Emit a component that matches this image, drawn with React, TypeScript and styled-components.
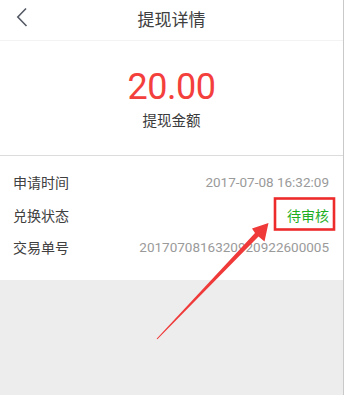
import React from "react";
import styled, { createGlobalStyle } from "styled-components";

const GlobalStyle = createGlobalStyle`
  html, body {
    margin: 0;
    padding: 0;
    background: #ededed;
  }
  body {
    font-family: Roboto, "Noto Sans CJK SC", "Noto Sans", sans-serif;
    -webkit-font-smoothing: antialiased;
  }
`;

interface DetailRow {
  label: string;
  value: string;
  status?: boolean;
}

const rows: DetailRow[] = [
  { label: "申请时间", value: "2017-07-08 16:32:09" },
  { label: "兑换状态", value: "待审核", status: true },
  { label: "交易单号", value: "2017070816320920922600005" },
];

const App: React.FC = () => {
  return (
    <>
      <GlobalStyle />
      <Page>
        <Header>
          <BackButton aria-label="back">
            <svg width="12" height="20" viewBox="0 0 12 20">
              <polyline
                points="10,1.5 1.8,10 10.5,19"
                fill="none"
                stroke="#555a66"
                strokeWidth="1.6"
                strokeLinejoin="miter"
              />
            </svg>
          </BackButton>
          <Title>提现详情</Title>
        </Header>

        <AmountBlock>
          <Amount>20.00</Amount>
          <AmountLabel>提现金额</AmountLabel>
        </AmountBlock>

        <InfoList>
          {rows.map((r) => (
            <Row key={r.label}>
              <Label>{r.label}</Label>
              <Value $status={r.status}>{r.value}</Value>
            </Row>
          ))}
        </InfoList>

        <Filler />

        {/* annotation drawn on top of the screenshot */}
        <Annotation width="344" height="395" viewBox="0 0 344 395">
          <rect
            x="275"
            y="198.5"
            width="59"
            height="31"
            fill="none"
            stroke="#ee2b2b"
            strokeWidth="2.6"
          />
          <polygon
            points="156.6,338.7 255,233 252,228.5 268.5,223 264.5,241.5 258.5,236.5 157.4,339.3"
            fill="#f03a3a"
          />
        </Annotation>
      </Page>
    </>
  );
};

export default App;

const Page = styled.div`
  position: relative;
  width: 344px;
  min-height: 395px;
  display: flex;
  flex-direction: column;
  background: #ededed;
  box-sizing: border-box;
  border-right: 1px solid #c9c9c9;
  overflow: hidden;
`;

const Header = styled.div`
  height: 40px;
  display: flex;
  align-items: center;
  justify-content: center;
  position: relative;
  background: #fff;
  border-bottom: 1px solid #f3f3f3;
`;

const BackButton = styled.div`
  position: absolute;
  left: 16px;
  top: 7px;
  display: flex;
`;

const Title = styled.div`
  font-size: 17px;
  color: #404040;
  margin-top: -3px;
`;

const AmountBlock = styled.div`
  height: 114px;
  display: flex;
  flex-direction: column;
  align-items: center;
  background: #fff;
  border-bottom: 1px solid #dcdcdc;
`;

const Amount = styled.div`
  margin-top: 24px;
  font-size: 36px;
  line-height: 44px;
  color: #f4403c;
  letter-spacing: -0.5px;
`;

const AmountLabel = styled.div`
  margin-top: 3px;
  font-size: 14.5px;
  line-height: 20px;
  color: #3a3a3a;
`;

const InfoList = styled.div`
  background: #fff;
  padding: 10px 14px 16px 13px;
  display: flex;
  flex-direction: column;
`;

const Row = styled.div`
  height: 32.5px;
  display: flex;
  align-items: center;
  justify-content: space-between;
`;

const Label = styled.span`
  font-size: 14px;
  color: #404040;
`;

const Value = styled.span<{ $status?: boolean }>`
  font-size: ${(p) => (p.$status ? "14px" : "13.5px")};
  color: ${(p) => (p.$status ? "#1fae1f" : "#9a9a9a")};
`;

const Filler = styled.div`
  flex: 1;
  background: #ededed;
`;

const Annotation = styled.svg`
  position: absolute;
  left: 0;
  top: 0;
  pointer-events: none;
`;
